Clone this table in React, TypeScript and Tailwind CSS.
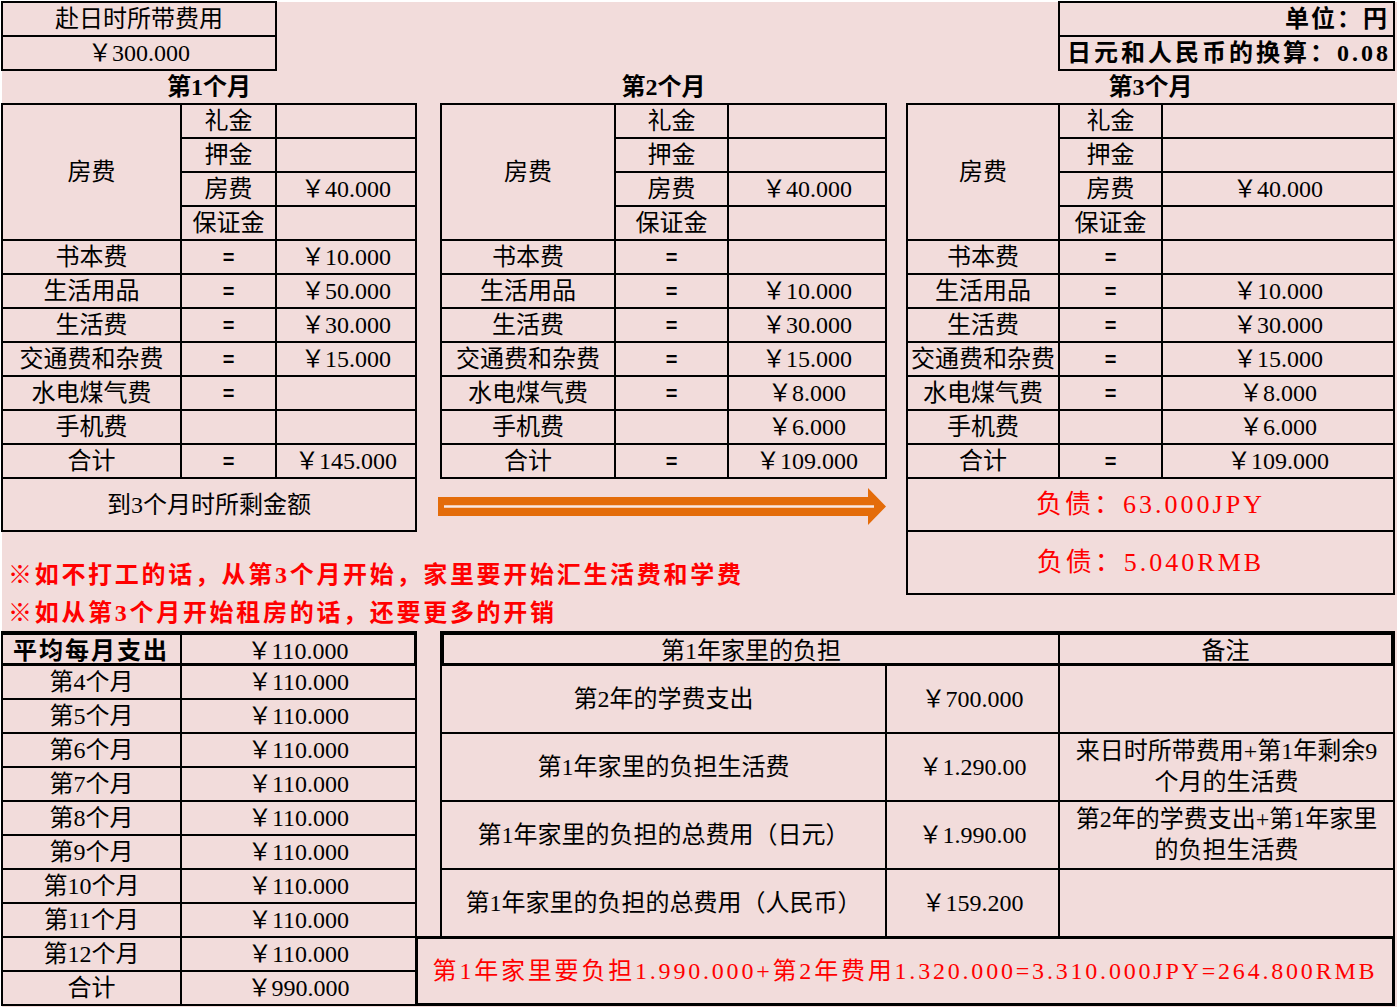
import React from "react";

const CELL =
  "-m-px border-2 border-black flex items-center justify-center overflow-hidden whitespace-nowrap";

function C({ cls, children }: { cls: string; children?: React.ReactNode }) {
  return <div className={CELL + " " + cls}>{children}</div>;
}

const EQ = "font-['Liberation_Sans',sans-serif] font-bold text-[20px]";

type Cols = { a: string; b: string; c: string; all: string };

const sixRows = [
  "row-start-8",
  "row-start-9",
  "row-start-10",
  "row-start-11",
  "row-start-12",
  "row-start-13",
  "row-start-14",
];
const labels = ["书本费", "生活用品", "生活费", "交通费和杂费", "水电煤气费", "手机费", "合计"];
const eqs = ["=", "=", "=", "=", "=", "", "="];

function TopTable({ cols, vals }: { cols: Cols; vals: string[] }) {
  return (
    <>
      <C cls={cols.a + " row-start-4 row-span-4"}>房费</C>
      <C cls={cols.b + " row-start-4"}>礼金</C>
      <C cls={cols.c + " row-start-4"}></C>
      <C cls={cols.b + " row-start-5"}>押金</C>
      <C cls={cols.c + " row-start-5"}></C>
      <C cls={cols.b + " row-start-6"}>房费</C>
      <C cls={cols.c + " row-start-6"}>￥40.000</C>
      <C cls={cols.b + " row-start-7"}>保证金</C>
      <C cls={cols.c + " row-start-7"}></C>
      {sixRows.map((r, i) => (
        <React.Fragment key={r}>
          <C cls={cols.a + " " + r}>{labels[i]}</C>
          <C cls={cols.b + " " + r}>
            <span className={EQ}>{eqs[i]}</span>
          </C>
          <C cls={cols.c + " " + r}>{vals[i]}</C>
        </React.Fragment>
      ))}
    </>
  );
}

const T1: Cols = { a: "col-start-1", b: "col-start-2", c: "col-start-3", all: "col-start-1 col-span-3" };
const T2: Cols = { a: "col-start-5", b: "col-start-6", c: "col-start-7", all: "col-start-5 col-span-3" };
const T3: Cols = { a: "col-start-9", b: "col-start-10", c: "col-start-11", all: "col-start-9 col-span-3" };

const v1 = ["￥10.000", "￥50.000", "￥30.000", "￥15.000", "", "", "￥145.000"];
const v2 = ["", "￥10.000", "￥30.000", "￥15.000", "￥8.000", "￥6.000", "￥109.000"];

const monthRows = [
  ["row-start-20", "第4个月", "￥110.000"],
  ["row-start-21", "第5个月", "￥110.000"],
  ["row-start-22", "第6个月", "￥110.000"],
  ["row-start-23", "第7个月", "￥110.000"],
  ["row-start-24", "第8个月", "￥110.000"],
  ["row-start-25", "第9个月", "￥110.000"],
  ["row-start-26", "第10个月", "￥110.000"],
  ["row-start-27", "第11个月", "￥110.000"],
  ["row-start-28", "第12个月", "￥110.000"],
  ["row-start-29", "合计", "￥990.000"],
];

export default function App() {
  return (
    <div className="w-[1397px] h-[1007px] bg-[#f2dcdb] border-t-2 border-l-2 border-white text-black text-[24px] leading-[26px] font-['Liberation_Serif','Noto_Sans_CJK_SC',serif]">
      <div className="grid grid-cols-[179px_95px_140px_25px_174px_113px_158px_21px_152px_103px_232px] grid-rows-[34px_34px_34px_repeat(11,34px)_53px_25px_38px_38px_33px_repeat(10,34px)]">
        {/* top-left box */}
        <C cls="col-start-1 col-span-2 row-start-1">赴日时所带费用</C>
        <C cls="col-start-1 col-span-2 row-start-2">￥300.000</C>

        {/* top-right box */}
        <C cls="col-start-10 col-span-2 row-start-1 justify-end pr-[4px] font-bold tracking-[2px]">单位：円</C>
        <C cls="col-start-10 col-span-2 row-start-2 justify-end pr-[2px] font-bold tracking-[3px]">
          日元和人民币的换算：0.08
        </C>

        {/* month titles */}
        <div className="col-start-1 col-span-3 row-start-3 flex items-center justify-center font-bold">第1个月</div>
        <div className="col-start-5 col-span-3 row-start-3 flex items-center justify-center font-bold">第2个月</div>
        <div className="col-start-9 col-span-3 row-start-3 flex items-center justify-center font-bold">第3个月</div>

        <TopTable cols={T1} vals={v1} />
        <TopTable cols={T2} vals={v2} />
        <TopTable cols={T3} vals={v2} />

        <C cls="col-start-1 col-span-3 row-start-15">到3个月时所剩金额</C>

        {/* arrow */}
        <div className="col-start-5 col-span-3 row-start-15">
          <svg width="445" height="53" viewBox="0 0 445 53" className="block overflow-visible">
            <polygon points="-3,19 427,19 427,10 445,28.5 427,47 427,38 -3,38" fill="#e46c0a" />
            <line x1="3" y1="28.5" x2="433" y2="28.5" stroke="#f9e8e4" strokeWidth="2.5" />
          </svg>
        </div>

        <C cls="col-start-9 col-span-3 row-start-15 text-[#ff0000] text-[26px] tracking-[3px]">负债：63.000JPY</C>
        <C cls="col-start-9 col-span-3 row-start-16 row-span-2 text-[#ff0000] text-[26px] tracking-[3px]">负债：5.040RMB</C>

        <div className="col-start-1 col-span-8 row-start-17 flex items-center pl-[6px] text-[#ff0000] font-bold tracking-[2.7px] whitespace-nowrap">
          ※如不打工的话，从第3个月开始，家里要开始汇生活费和学费
        </div>
        <div className="col-start-1 col-span-8 row-start-18 flex items-center pl-[6px] text-[#ff0000] font-bold tracking-[2.7px] whitespace-nowrap">
          ※如从第3个月开始租房的话，还要更多的开销
        </div>

        {/* bottom-left table */}
        <C cls="col-start-1 row-start-19 border-t-4 border-b-[3px] justify-start items-start pt-[4px] pl-[10px] font-bold tracking-[2px] leading-[24px]">
          平均每月支出
        </C>
        <C cls="col-start-2 col-span-2 row-start-19 border-t-4 border-b-[3px] border-r-[3px] items-start pt-[4px] leading-[24px]">
          ￥110.000
        </C>
        {monthRows.map(([r, l, v]) => (
          <React.Fragment key={r}>
            <C cls={"col-start-1 " + r}>{l}</C>
            <C cls={"col-start-2 col-span-2 " + r}>{v}</C>
          </React.Fragment>
        ))}

        {/* bottom-right table */}
        <C cls="col-start-5 col-span-5 row-start-19 border-t-4 border-l-4 border-b-[3px] items-start pt-[4px] leading-[24px]">
          第1年家里的负担
        </C>
        <C cls="col-start-10 col-span-2 row-start-19 border-t-4 border-r-4 border-b-[3px] items-start pt-[4px] leading-[24px]">
          备注
        </C>

        <C cls="col-start-5 col-span-3 row-start-20 row-span-2">第2年的学费支出</C>
        <C cls="col-start-8 col-span-2 row-start-20 row-span-2">￥700.000</C>
        <C cls="col-start-10 col-span-2 row-start-20 row-span-2"></C>

        <C cls="col-start-5 col-span-3 row-start-22 row-span-2">第1年家里的负担生活费</C>
        <C cls="col-start-8 col-span-2 row-start-22 row-span-2">￥1.290.00</C>
        <C cls="col-start-10 col-span-2 row-start-22 row-span-2 text-center leading-[31px]">
          <span>
            来日时所带费用+第1年剩余9
            <br />
            个月的生活费
          </span>
        </C>

        <C cls="col-start-5 col-span-3 row-start-24 row-span-2">第1年家里的负担的总费用（日元）</C>
        <C cls="col-start-8 col-span-2 row-start-24 row-span-2">￥1.990.00</C>
        <C cls="col-start-10 col-span-2 row-start-24 row-span-2 text-center leading-[31px]">
          <span>
            第2年的学费支出+第1年家里
            <br />
            的负担生活费
          </span>
        </C>

        <C cls="col-start-5 col-span-3 row-start-26 row-span-2">第1年家里的负担的总费用（人民币）</C>
        <C cls="col-start-8 col-span-2 row-start-26 row-span-2">￥159.200</C>
        <C cls="col-start-10 col-span-2 row-start-26 row-span-2"></C>

        <C cls="col-start-4 col-span-8 row-start-28 row-span-2 border-[3px] text-[#ff0000] tracking-[2.8px]">
          第1年家里要负担1.990.000+第2年费用1.320.000=3.310.000JPY=264.800RMB
        </C>
      </div>
    </div>
  );
}
